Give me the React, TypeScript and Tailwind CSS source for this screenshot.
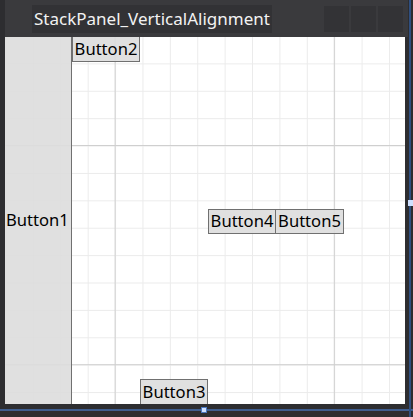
import React from "react";

const gridBg =
  "bg-[linear-gradient(to_right,#cfcfcf_1px,transparent_1px),linear-gradient(to_bottom,#cfcfcf_1px,transparent_1px),linear-gradient(to_right,#ebebeb_1px,transparent_1px),linear-gradient(to_bottom,#ebebeb_1px,transparent_1px)] bg-[size:219.2px_219.2px,219.2px_219.2px,27.4px_27.4px,27.4px_27.4px] bg-[position:109.6px_108px,109.6px_108px,0.5px_-1px,0.5px_-1px]";

function Btn({ label, className = "" }: { label: string; className?: string }) {
  return (
    <div
      className={`flex items-center justify-center bg-[#dddddd]/90 border border-[#707070] text-black text-[16.6px] leading-none px-[1px] h-[25px] ${className}`}
    >
      {label}
    </div>
  );
}

export default function App() {
  return (
    <div
      className="relative w-[413px] h-[417px] bg-[#2d2d30] overflow-hidden flex flex-col"
      style={{ fontFamily: '"Noto Sans", "Open Sans", sans-serif' }}
    >
      {/* title bar */}
      <div className="h-[37px] mx-[5px] bg-[#3a3a3d] flex items-center justify-between pl-[27px] pr-[5px] shrink-0">
        <div className="bg-[#323235] h-[28px] flex items-center px-[2px] text-[#f2f2f2] text-[17px]">
          StackPanel_VerticalAlignment
        </div>
        <div className="flex gap-[2px] h-[26px]">
          <div className="w-[25px] bg-[#333336]" />
          <div className="w-[25px] bg-[#333336]" />
          <div className="w-[25px] bg-[#333336]" />
        </div>
      </div>
      {/* content */}
      <div className={`mx-[5px] w-[400px] h-[367px] bg-white ${gridBg} flex flex-row`}>
        <Btn label="Button1" className="!h-auto self-stretch w-[67px] border-y-0 border-l-0 justify-start pl-[1px]" />
        <Btn label="Button2" className="self-start w-[68px] border-t-0" />
        <Btn label="Button3" className="self-end w-[68px] border-b-0" />
        <Btn label="Button4" className="self-center w-[68px] mt-[2px]" />
        <Btn label="Button5" className="self-center w-[68px] mt-[2px] border-l-0" />
      </div>
      {/* bottom */}
      <div className="flex-1 relative">
        <div className="absolute left-0 right-0 top-[5px] h-[2px] bg-[#3e5d8f]" />
        <div className="absolute left-[201px] top-[3px] w-[6px] h-[6px] bg-[#cfe0ff] border border-[#4a78c0]" />
      </div>
      {/* right selection line */}
      <div className="absolute top-0 bottom-0 left-[409px] w-[2px] bg-[#2f4f80]" />
      <div className="absolute left-[408px] top-[200px] w-[5px] h-[6px] bg-[#cfe0ff]" />
    </div>
  );
}
